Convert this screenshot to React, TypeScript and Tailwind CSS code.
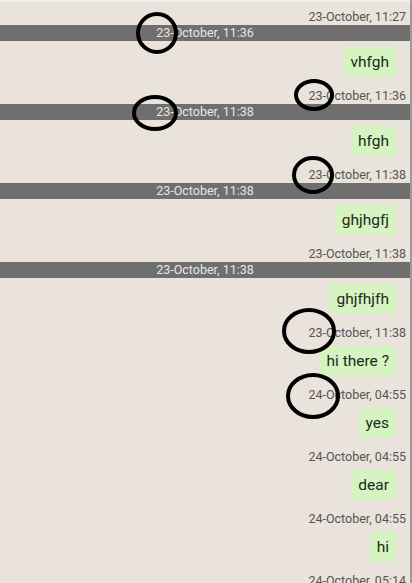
type Item =
  | { kind: "bar"; label: string }
  | { kind: "msg"; text: string; time: string };

const ITEMS: Item[] = [
  { kind: "bar", label: "23-October, 11:36" },
  { kind: "msg", text: "vhfgh", time: "23-October, 11:36" },
  { kind: "bar", label: "23-October, 11:38" },
  { kind: "msg", text: "hfgh", time: "23-October, 11:38" },
  { kind: "bar", label: "23-October, 11:38" },
  { kind: "msg", text: "ghjhgfj", time: "23-October, 11:38" },
  { kind: "bar", label: "23-October, 11:38" },
  { kind: "msg", text: "ghjfhjfh", time: "23-October, 11:38" },
  { kind: "msg", text: "hi there ?", time: "24-October, 04:55" },
  { kind: "msg", text: "yes", time: "24-October, 04:55" },
  { kind: "msg", text: "dear", time: "24-October, 04:55" },
  { kind: "msg", text: "hi", time: "24-October, 05:14" },
];

// hand-drawn marker rings over the screenshot
const RINGS = [
  { cx: 157, cy: 33, rx: 19, ry: 19 },
  { cx: 314, cy: 95, rx: 18, ry: 14 },
  { cx: 155, cy: 113, rx: 21, ry: 16 },
  { cx: 313, cy: 175, rx: 19, ry: 17 },
  { cx: 309, cy: 331, rx: 25, ry: 21 },
  { cx: 313, cy: 396, rx: 25, ry: 21 },
];

function Stamp({ time }: { time: string }) {
  return (
    <div className="text-right pr-[4px] text-[12.5px] leading-[14px] text-[#555]">
      {time}
    </div>
  );
}

export default function App() {
  return (
    <div
      className="relative w-[412px] h-[583px] overflow-hidden bg-[#e9e3dc] border-r-2 border-[#9c9a98]"
      style={{ fontFamily: "Roboto, 'Noto Sans', sans-serif" }}
    >
      <div className="h-[2px] bg-[#f3f1ef]" />
      <div className="mt-[8px]">
        <Stamp time="23-October, 11:27" />
      </div>
      {ITEMS.map((it, i) =>
        it.kind === "bar" ? (
          <div
            key={i}
            className="mt-[1px] h-[16px] bg-[#6f6f6f] text-center text-[12.5px] leading-[16px] text-[#e6e6e6]"
          >
            {it.label}
          </div>
        ) : (
          <div key={i} className="flex flex-col">
            <div className="mt-[6px] flex justify-end pr-[14px]">
              <div className="h-[30px] rounded-[4px] bg-[#d6f3c2] px-[7px] text-[15.5px] leading-[30px] text-[#1d2b1a]">
                {it.text}
              </div>
            </div>
            <div className="mt-[12px]">
              <Stamp time={it.time} />
            </div>
          </div>
        )
      )}
      <svg className="absolute left-0 top-0" width="412" height="583">
        {RINGS.map((r, i) => (
          <ellipse
            key={i}
            cx={r.cx}
            cy={r.cy}
            rx={r.rx}
            ry={r.ry}
            fill="none"
            stroke="#000"
            strokeWidth="4"
          />
        ))}
      </svg>
    </div>
  );
}
